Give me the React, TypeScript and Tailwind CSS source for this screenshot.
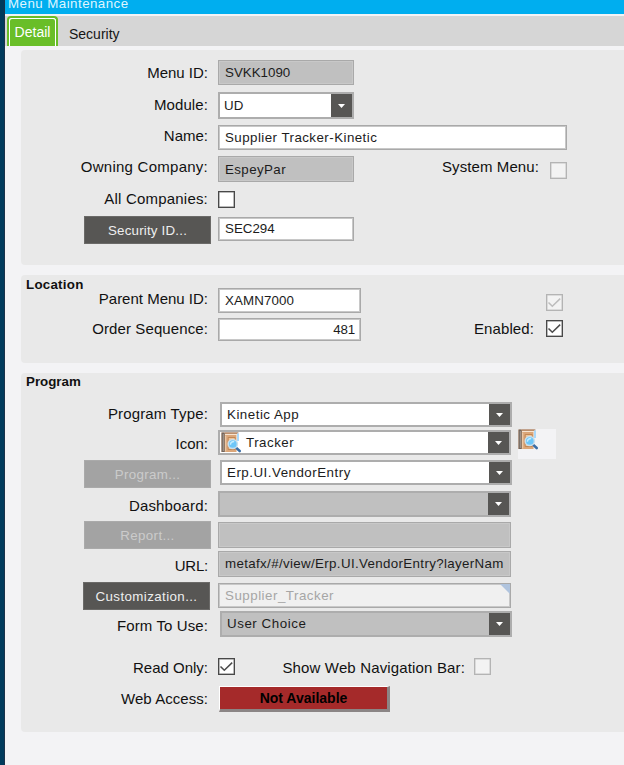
import React from "react";
import clsx from "clsx";

interface BaseProps {
  className?: string;
  children?: React.ReactNode;
}

const Label: React.FC<BaseProps> = ({ className, children }) => (
  <div className={clsx("w-[188px] shrink-0 pr-px text-right text-[15px] leading-5 whitespace-nowrap text-[#111]", className)}>
    {children}
  </div>
);

const Field: React.FC<BaseProps & { disabled?: boolean }> = ({ className, disabled, children }) => (
  <div
    className={clsx(
      "relative shrink-0 overflow-hidden border border-[#a9a9a9] pl-1.5 text-[13.33px] leading-4 whitespace-nowrap text-[#1c1c1c] outline outline-[#c8c8c8] -outline-offset-2",
      disabled ? "bg-[#c0c0c0]" : "bg-white",
      className
    )}
  >
    {children}
  </div>
);

const Combo: React.FC<BaseProps & { disabled?: boolean }> = ({ className, disabled, children }) => (
  <div
    className={clsx(
      "flex shrink-0 justify-between border-2 border-[#adadad] text-[13.33px] leading-4 whitespace-nowrap text-[#1c1c1c]",
      disabled ? "bg-[#c0c0c0]" : "bg-white",
      className
    )}
  >
    <div className="flex">{children}</div>
    <div className="flex w-[21px] items-center justify-center bg-[#575654]">
      <svg width="7" height="4" viewBox="0 0 7 4">
        <path d="M0 0h7L3.5 4z" fill="#fff" />
      </svg>
    </div>
  </div>
);

const Button: React.FC<BaseProps & { disabled?: boolean }> = ({ className, disabled, children }) => (
  <div
    className={clsx(
      "flex h-7 w-[127px] shrink-0 items-center justify-center border pt-px text-[13.33px] leading-4 whitespace-nowrap",
      disabled ? "border-[#aaa] bg-[#a3a3a3] text-[#cbcbcb]" : "border-[#6b6a68] bg-[#575654] text-[#eee]",
      className
    )}
  >
    {children}
  </div>
);

const Check: React.FC<{ className?: string; checked?: boolean; disabled?: boolean }> = ({ className, checked, disabled }) => (
  <div
    className={clsx(
      "size-[17px] shrink-0 border",
      disabled
        ? "border-[#b4b4b4] bg-[#f3f3f3] text-[#bdbdbd] shadow-[inset_0_0_0_0.5px_#c4c4c4]"
        : "border-[#484848] bg-white text-[#4c4c4c] shadow-[inset_0_0_0_0.5px_#777]",
      className
    )}
  >
    {checked && (
      <svg width="15" height="15" viewBox="0 0 15 15" fill="none" stroke="currentColor" strokeWidth="1.5">
        <path d="M1.5 7.5 5.3 11.3 13.2 3.6" />
      </svg>
    )}
  </div>
);

const TrackerIcon: React.FC<{ className?: string }> = ({ className }) => (
  <svg className={className} width="21" height="21" viewBox="0 0 21 21">
    <path d="M.5.5H17L15.5 3v17H.5z" fill="#dba679" />
    <path d="M.5.5h3.2V20H.5z" fill="#72665f" />
    <path d="M1.8 2h1v17h-1z" fill="#a79b92" />
    <path d="M4 1h13.5" stroke="#9c7963" />
    <path d="M4 2.5h12" stroke="#f6e4d2" />
    <path d="M16 1.5h2V9h-2z" fill="#a9d8fa" />
    <path d="M4.7 3.5v16" stroke="#f0cfae" />
    <path d="M7.2 5.5h7v12h-7z" fill="#edc59c" stroke="#bd8250" strokeWidth=".9" />
    <path d="m15 15.6 3.7 3.4" stroke="#3a6ea6" strokeWidth="2.6" strokeLinecap="round" />
    <circle cx="11.8" cy="12" r="4.6" fill="#6dc6f8" stroke="#c9dfec" strokeWidth="1.5" />
    <path d="M9.4 12.8c0-2.2 1.3-3.3 3.8-3.3" stroke="#c3ecff" strokeWidth="1.5" fill="none" />
  </svg>
);

const Row: React.FC<BaseProps> = ({ className, children }) => (
  <div className={clsx("flex items-start", className)}>{children}</div>
);

const App: React.FC = () => {
  return (
    <div className="flex h-[765px] w-[624px] overflow-hidden bg-[#f3f3f5] font-['Liberation_Sans',Arial,sans-serif]">
      <div className="w-[5px] shrink-0 border-r border-[#19324a] bg-[#003b5c]" />

      <div className="flex min-w-0 flex-1 flex-col">
        {/* Title bar */}
        <div className="h-3.5 shrink-0 bg-[#00aeef] pl-[3px]">
          <div className="-mt-1 text-[13.33px] leading-4 tracking-[0.45px] text-[#dff5ff]">Menu Maintenance</div>
        </div>

        {/* Tabs */}
        <div className="mt-0.5 flex h-[30px] shrink-0 bg-[#d6d6d6] text-sm">
          <div className="ml-[2px] h-[30px] w-[51px] rounded-t-[4px] border-2 border-b-0 border-[#69be28] bg-white pt-px">
            <div className="mx-px h-full rounded-t-[2px] bg-[#69be28] pt-[3px] text-center leading-5 text-white">Detail</div>
          </div>
          <div className="ml-[11px] pt-2 leading-5 text-[#151515]">Security</div>
        </div>

        {/* Menu details */}
        <section className="mt-1 ml-4 h-[215px] shrink-0 rounded-l-[4px] bg-[#e9e9e9] pt-[10px]">
          <Row className="h-8">
            <Label className="mt-[3px]">Menu ID:</Label>
            <Field disabled className="ml-[9px] h-[25px] w-[136px] pt-1">SVKK1090</Field>
          </Row>
          <Row className="h-[33px]">
            <Label className="mt-[3px] tracking-[0.1px]">Module:</Label>
            <Combo className="ml-[9px] h-[27px] w-[136px]">
              <span className="pt-1 pl-1">UD</span>
            </Combo>
          </Row>
          <Row className="h-[31px]">
            <Label className="mt-px">Name:</Label>
            <Field className="ml-[9px] h-[25px] w-[349px] pt-1 tracking-[0.45px]">Supplier Tracker-Kinetic</Field>
          </Row>
          <Row className="h-[31px]">
            <Label className="mt-px tracking-[0.25px]">Owning Company:</Label>
            <Field disabled className="ml-[9px] h-[26px] w-[136px] pt-[5px] tracking-[0.4px]">EspeyPar</Field>
            <Label className="mt-px ml-[-2px] tracking-[0.1px]">System Menu:</Label>
            <Check disabled className="mt-[6px] ml-[10px]" />
          </Row>
          <Row className="h-[29px]">
            <Label className="mt-0.5 tracking-[0.2px]">All Companies:</Label>
            <Check className="mt-1 ml-[9px]" />
          </Row>
          <Row>
            <Button className="ml-[63px] tracking-[0.2px]">Security ID...</Button>
            <Field className="mt-px ml-[7px] h-6 w-[136px] pt-[3px]">SEC294</Field>
          </Row>
        </section>

        {/* Location */}
        <section className="mt-[10px] ml-4 h-[88px] shrink-0 rounded-l-[4px] bg-[#e9e9e9] pt-px">
          <h2 className="h-3 pt-px pl-[5px] text-[13.33px] leading-4 font-bold tracking-[0.25px] text-[#111]">Location</h2>
          <Row className="h-[30px]">
            <Label className="mt-px">Parent Menu ID:</Label>
            <Field className="ml-[9px] h-[25px] w-[143px] pt-1 tracking-[0.1px]">XAMN7000</Field>
            <Check checked disabled className="mt-[6px] ml-[185px]" />
          </Row>
          <Row>
            <Label className="mt-px tracking-[0.1px]">Order Sequence:</Label>
            <Field className="ml-[9px] h-[23px] w-[143px] pt-[3px] pr-[5px] text-right tracking-[-0.2px]">481</Field>
            <Label className="mt-px ml-[-14px] tracking-[0.1px]">Enabled:</Label>
            <Check checked className="mt-0.5 ml-[11px]" />
          </Row>
        </section>

        {/* Program */}
        <section className="mt-[10px] ml-4 h-[359px] shrink-0 rounded-l-[4px] bg-[#e9e9e9] pt-px">
          <h2 className="h-7 pl-[5px] text-[13.33px] leading-4 font-bold text-[#111]">Program</h2>
          <Row className="h-7">
            <Label className="mt-0.5 tracking-[0.15px]">Program Type:</Label>
            <Combo className="ml-[11px] h-[25px] w-[292px]">
              <span className="pt-[3px] pl-[5px] tracking-[0.5px]">Kinetic App</span>
            </Combo>
          </Row>
          <Row className="h-[30px]">
            <Label className="mt-1">Icon:</Label>
            <Combo className="ml-[9px] h-[25px] w-[293px]">
              <TrackerIcon className="ml-px" />
              <span className="pt-[3px] pl-1 tracking-[0.5px]">Tracker</span>
            </Combo>
            <div className="-mt-px ml-[7px] h-[30px] w-[38px] bg-[#f3f3f5]">
              <TrackerIcon />
            </div>
          </Row>
          <Row className="h-[31px]">
            <Button disabled className="ml-[63px] tracking-[0.35px]">Program...</Button>
            <Combo className="ml-[9px] h-[25px] w-[292px]">
              <span className="pt-[3px] pl-[5px] tracking-[0.5px]">Erp.UI.VendorEntry</span>
            </Combo>
          </Row>
          <Row className="h-[30px]">
            <Label className="mt-[5px] tracking-[0.15px]">Dashboard:</Label>
            <Combo disabled className="ml-[9px] h-[26px] w-[293px]" />
          </Row>
          <Row className="h-[30px]">
            <Button disabled className="ml-[63px] tracking-[0.35px]">Report...</Button>
            <Field disabled className="mt-px ml-[7px] h-[26px] w-[293px]" />
          </Row>
          <Row className="h-[31px]">
            <Label className="mt-[5px] tracking-[-0.2px]">URL:</Label>
            <Field disabled className="ml-[9px] h-[26px] w-[293px] pt-1 tracking-[0.35px]">
              metafx/#/view/Erp.UI.VendorEntry?layerNam
            </Field>
          </Row>
          <Row className="h-[29px]">
            <Button className="ml-[62px] tracking-[0.4px]">Customization...</Button>
            <Field className="mt-px ml-2 h-[25px] w-[293px] bg-[#f0f0f0]! pt-1 tracking-[0.5px] text-[#a6a6a6]!">
              Supplier_Tracker
              <svg className="absolute top-[-1px] right-[-1px]" width="12" height="12" viewBox="0 0 12 12">
                <path d="M0 0h12v12z" fill="#b0c4de" />
              </svg>
            </Field>
          </Row>
          <Row className="h-[47px]">
            <Label className="mt-[5px] tracking-[0.1px]">Form To Use:</Label>
            <Combo disabled className="ml-[11px] h-[26px] w-[292px]">
              <span className="pt-[3px] pl-[5px] tracking-[0.55px]">User Choice</span>
            </Combo>
          </Row>
          <Row className="h-7">
            <Label>Read Only:</Label>
            <Check checked className="ml-[9px]" />
            <Label className="ml-[43px] tracking-[0.15px]">Show Web Navigation Bar:</Label>
            <Check disabled className="ml-2" />
          </Row>
          <Row>
            <Label className="mt-[3px] tracking-[0.05px]">Web Access:</Label>
            <div className="ml-[10px] h-[26px] w-[171px] border-t border-r-[3px] border-b-[3px] border-l border-t-white border-r-[#8b8585] border-b-[#8b8585] border-l-white bg-[#a52a2a] pt-[3px] text-center text-sm leading-4 font-bold text-black">
              Not Available
            </div>
          </Row>
        </section>
      </div>
    </div>
  );
};

export default App;
